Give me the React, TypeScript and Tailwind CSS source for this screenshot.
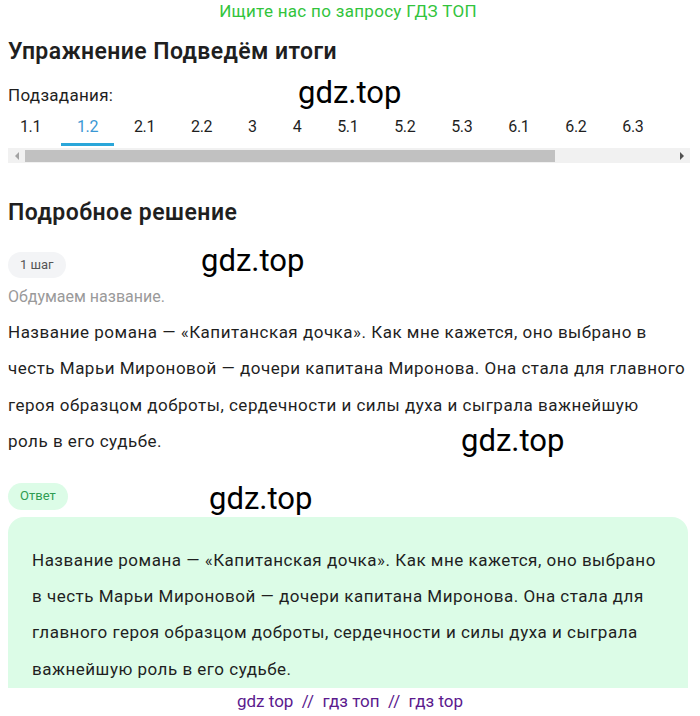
import React from 'react';

const tabs = ['1.1', '1.2', '2.1', '2.2', '3', '4', '5.1', '5.2', '5.3', '6.1', '6.2', '6.3'];

// line breaks follow the original layout
const solutionLines = [
    'Название романа — «Капитанская дочка». Как мне кажется, оно выбрано в',
    'честь Марьи Мироновой — дочери капитана Миронова. Она стала для главного',
    'героя образцом доброты, сердечности и силы духа и сыграла важнейшую',
    'роль в его судьбе.',
];

const answerLines = [
    'Название романа — «Капитанская дочка». Как мне кажется, оно выбрано',
    'в честь Марьи Мироновой — дочери капитана Миронова. Она стала для',
    'главного героя образцом доброты, сердечности и силы духа и сыграла',
    'важнейшую роль в его судьбе.',
];

const Watermark: React.FC<{ className: string }> = ({ className }) => (
    <div className={`absolute text-[31px] leading-none text-black pointer-events-none ${className}`}>
        gdz.top
    </div>
);

const App: React.FC = () => {
    const active = '1.2';

    return (
        <div className="relative h-[716px] overflow-hidden bg-white text-[#1f1f1f] pl-2 pr-3" style={{ fontFamily: 'Roboto, "Noto Sans", sans-serif' }}>
            <div className="h-6 flex items-center justify-center text-[17px] tracking-[0.3px] text-[#32c43c]">
                Ищите нас по запросу ГДЗ ТОП
            </div>

            <h1 className="mt-[14px] text-[23px] leading-7 font-semibold tracking-[0.4px]">Упражнение Подведём итоги</h1>

            <div className="mt-[19px] text-[17px] leading-5 tracking-[0.3px]">Подзадания:</div>

            {/* subtask tabs */}
            <div className="mt-[5px] flex gap-[4px] -ml-[4px]">
                {tabs.map(t => (
                    <div
                        key={t}
                        className={`px-4 h-[36px] flex items-center text-[16px] tracking-tight border-b-[3px] ${t === active ? 'text-[#3a98d4] border-[#2aa6d9]' : 'border-transparent'}`}
                    >
                        {t}
                    </div>
                ))}
            </div>

            {/* horizontal scrollbar of the tab strip */}
            <div className="mt-[2px] -mr-[2px] h-[15px] bg-[#f1f1f1] flex items-center">
                <div className="w-[17px] flex justify-center">
                    <div className="w-0 h-0 border-y-[4px] border-y-transparent border-r-[4px] border-r-[#a3a3a3]" />
                </div>
                <div className="h-[12px] w-[530px] bg-[#c1c1c1]" />
                <div className="flex-1" />
                <div className="w-[17px] flex justify-center">
                    <div className="w-0 h-0 border-y-[4px] border-y-transparent border-l-[4px] border-l-[#505050]" />
                </div>
            </div>

            <h2 className="mt-[36px] text-[23px] leading-7 font-semibold tracking-[0.5px]">Подробное решение</h2>

            <div className="mt-[25px] inline-flex items-center h-[26px] px-[12px] rounded-full bg-[#f3f4f6] text-[13px] text-[#555]">
                1 шаг
            </div>

            <div className="mt-[9px] text-[16px] leading-5 text-[#9a9a9a]">Обдумаем название.</div>

            <p className="mt-[7px] text-[17px] leading-[36.4px] tracking-[0.5px]">
                {solutionLines.map(l => (
                    <span key={l} className="block whitespace-nowrap">{l}</span>
                ))}
            </p>

            <div className="mt-[23px] inline-flex items-center h-[27px] px-[12px] rounded-full bg-[#dcfce7] text-[13px] text-[#2f9d52]">
                Ответ
            </div>

            <div className="mt-[7px] rounded-2xl bg-[#dcfce7] pl-6 pr-3 pt-[25px] pb-4">
                <p className="text-[17px] leading-[36.4px] tracking-[0.5px]">
                    {answerLines.map(l => (
                        <span key={l} className="block whitespace-nowrap">{l}</span>
                    ))}
                </p>
            </div>

            <Watermark className="left-[298px] top-[77px]" />
            <Watermark className="left-[201px] top-[245px]" />
            <Watermark className="left-[461px] top-[425px]" />
            <Watermark className="left-[209px] top-[483px]" />

            <div className="fixed bottom-0 left-0 right-0 h-[28px] bg-white flex items-center justify-center text-[17px] text-[#5b1a8e]">
                gdz top&nbsp;&nbsp;//&nbsp;&nbsp;гдз топ&nbsp;&nbsp;//&nbsp;&nbsp;гдз top
            </div>
        </div>
    );
};

export default App;
